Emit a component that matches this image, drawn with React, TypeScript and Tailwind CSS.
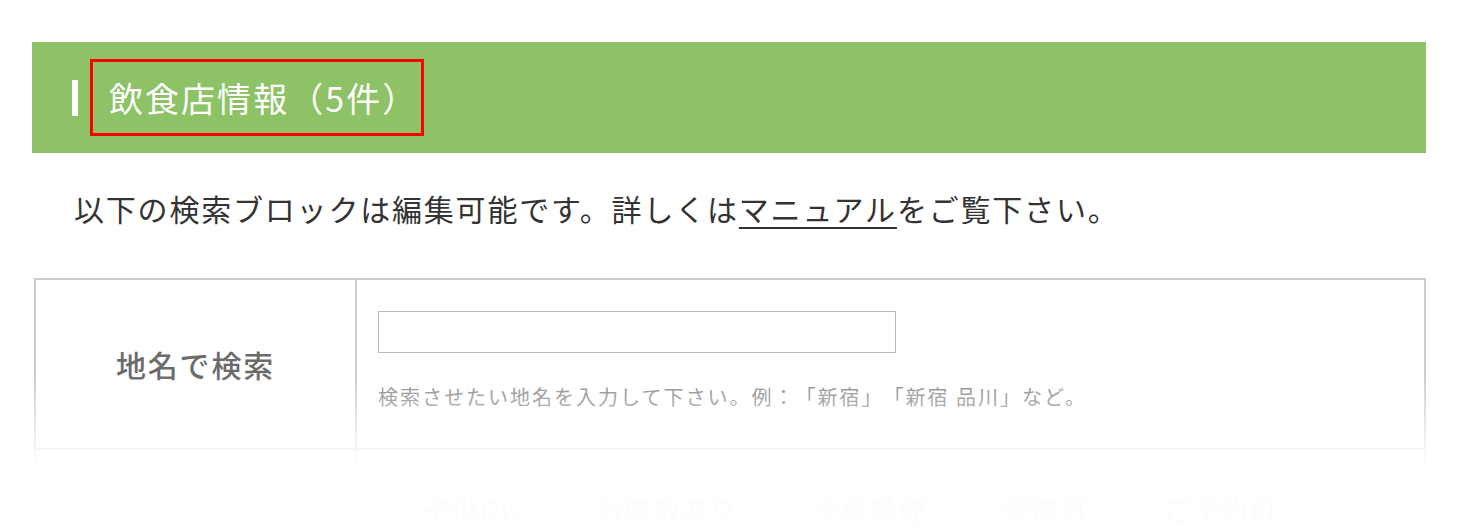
import React from "react";

const font = { fontFamily: '"Noto Sans CJK JP", "Noto Sans", sans-serif' };

function Check({ label }: { label: string }) {
  return (
    <div className="flex items-center gap-[20px]">
      <span className="w-[22px] h-[22px] border border-[#bbb] bg-white" />
      <span className="text-[27px] tracking-[0.05em] text-[#444]">{label}</span>
    </div>
  );
}

export default function App() {
  return (
    <div className="w-[1457px] h-[528px] overflow-hidden bg-white relative [text-spacing-trim:space-all]" style={font}>
      <div className="pt-[42px] pl-[32px] w-[1426px]">
        <div className="h-[111px] bg-[#8dc266] flex items-center pl-[40px]">
          <span className="w-[6px] h-[36px] bg-white mr-[12px]" />
          <div className="border-[3px] border-[#ff0000] h-[77px] w-[334px] flex items-center pl-[16px]">
            <h2 className="text-[34px] leading-none text-white tracking-[0.06em] font-normal whitespace-nowrap">飲食店情報（5件）</h2>
          </div>
        </div>
        <p className="mt-[37px] pl-[42px] text-[30px] leading-[36px] tracking-[0.06em] text-[#333]">
          以下の検索ブロックは編集可能です。詳しくは<span className="underline underline-offset-[6px] decoration-[2px]">マニュアル</span>をご覧下さい。
        </p>
        <div className="mt-[52px] ml-[2px] border-2 border-[#ccc] grid grid-cols-[321px_1fr]">
          <div className="h-[170px] border-r-2 border-b-2 border-[#ccc] flex items-center justify-center">
            <span className="text-[30px] tracking-[0.06em] text-[#6b6b6b] font-medium">地名で検索</span>
          </div>
          <div className="h-[170px] border-b-2 border-[#ccc] pl-[21px] pt-[31px]">
            <div className="w-[518px] h-[42px] border border-[#bbb] bg-white" />
            <p className="mt-[29px] text-[20px] tracking-[0.1em] text-[#888]">
              検索させたい地名を入力して下さい。例：「新宿」「新宿 品川」など。
            </p>
          </div>
          <div className="h-[180px] border-r-2 border-[#ccc] flex items-center justify-center">
            <span className="text-[30px] tracking-[0.04em] text-[#6b6b6b] font-medium">こだわりで検索</span>
          </div>
          <div className="h-[180px] pl-[24px] pt-[40px] flex gap-[34px] items-start">
            <Check label="子供OK" />
            <Check label="お座敷あり" />
            <Check label="全席禁煙" />
            <Check label="喫煙可" />
            <Check label="ご予約可" />
          </div>
        </div>
      </div>
      <div className="absolute left-0 right-0 top-[375px] bottom-0 bg-gradient-to-b from-white/0 via-white/[0.97] via-[58%] to-white/[0.99] pointer-events-none" />
    </div>
  );
}
